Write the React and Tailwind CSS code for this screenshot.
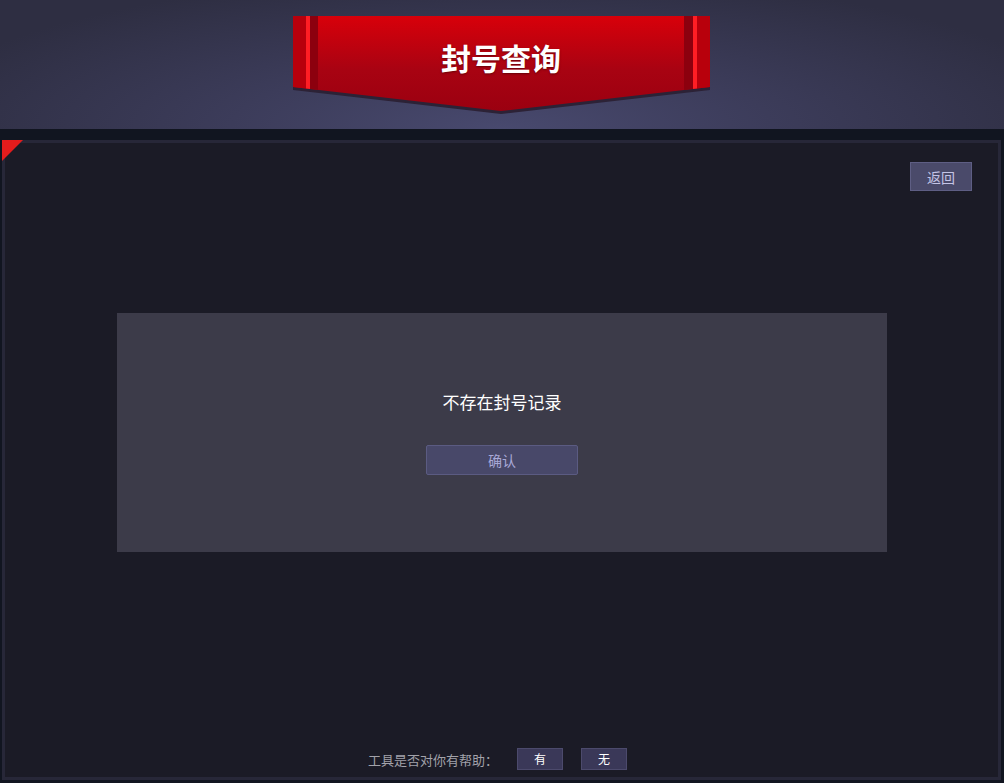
import React from "react";

const FONT = { fontFamily: '"Noto Sans CJK SC", "Noto Sans", sans-serif' };

function Ribbon() {
  return (
    <div className="relative w-[417px] h-[98px] -translate-x-[1px]">
      <svg width="417" height="98" viewBox="0 0 417 98" className="absolute inset-0">
        <defs>
          <linearGradient id="rib" x1="0" y1="0" x2="0" y2="1">
            <stop offset="0" stopColor="#d8000a" />
            <stop offset="0.55" stopColor="#a80312" />
            <stop offset="1" stopColor="#9a0010" />
          </linearGradient>
          <clipPath id="ribClip">
            <polygon points="0,0 417,0 417,71 208,95 0,71" />
          </clipPath>
        </defs>
        <polygon points="0,70 208,94 417,70 417,74 208,98 0,74" fill="#2c2236" />
        <g clipPath="url(#ribClip)">
          <rect x="0" y="0" width="417" height="98" fill="url(#rib)" />
          <rect x="0" y="0" width="13" height="98" fill="#b8000c" />
          <rect x="13" y="0" width="4" height="98" fill="#ff1e24" />
          <rect x="17" y="0" width="8" height="98" fill="#8c000e" />
          <rect x="391" y="0" width="9" height="98" fill="#8c000e" />
          <rect x="400" y="0" width="4" height="98" fill="#ff1e24" />
          <rect x="404" y="0" width="13" height="98" fill="#b8000c" />
        </g>
      </svg>
      <div className="absolute left-0 right-0 top-0 h-[82px] flex items-center justify-center">
        <span
          className="text-white font-bold text-[30px] leading-none [text-shadow:0_1px_2px_rgba(60,0,0,0.6)]"
          style={FONT}
        >
          封号查询
        </span>
      </div>
    </div>
  );
}

export default function App() {
  return (
    <div className="w-full h-[783px] bg-[#111520] overflow-hidden" style={FONT}>
      <header className="h-[129px] flex justify-center pt-[16px] bg-[radial-gradient(ellipse_60%_120%_at_50%_100%,#48496e_0%,#3c3c5a_45%,#2e2e42_100%)]">
        <Ribbon />
      </header>

      <main className="relative mt-[11px] ml-[2px] w-[999px] h-[640px] border-[3px] border-[#272738] bg-[#1b1b26] flex flex-col">
        <div className="absolute -left-[3px] -top-[3px] w-[21px] h-[21px] bg-[#e41c1c] [clip-path:polygon(0_0,100%_0,0_100%)]" />

        <div className="flex justify-end pt-[19px] pr-[26px]">
          <button className="w-[62px] h-[29px] bg-[#4a4a6a] border border-[#5e5e84] text-[#c4c4e6] text-[14px] leading-none">
            返回
          </button>
        </div>

        <section className="mt-[122px] ml-[112px] w-[770px] h-[239px] bg-[#3c3b49] flex flex-col items-center">
          <p className="mt-[77px] text-white text-[17px] leading-[24px]">不存在封号记录</p>
          <button className="mt-[31px] w-[152px] h-[30px] bg-[#484869] border border-[#5b5b82] rounded-[2px] text-[#a9a9d8] text-[14px] leading-none">
            确认
          </button>
        </section>

        <footer className="mt-auto pb-[7px] flex items-center justify-center pr-[8px]">
          <span className="text-[#a2a2aa] text-[13px] leading-none">工具是否对你有帮助：</span>
          <button className="ml-[19px] w-[46px] h-[22px] bg-[#3a3858] border border-[#4c4a6c] text-white text-[12px] leading-none">
            有
          </button>
          <button className="ml-[18px] w-[46px] h-[22px] bg-[#3a3858] border border-[#4c4a6c] text-white text-[12px] leading-none">
            无
          </button>
        </footer>
      </main>
    </div>
  );
}
